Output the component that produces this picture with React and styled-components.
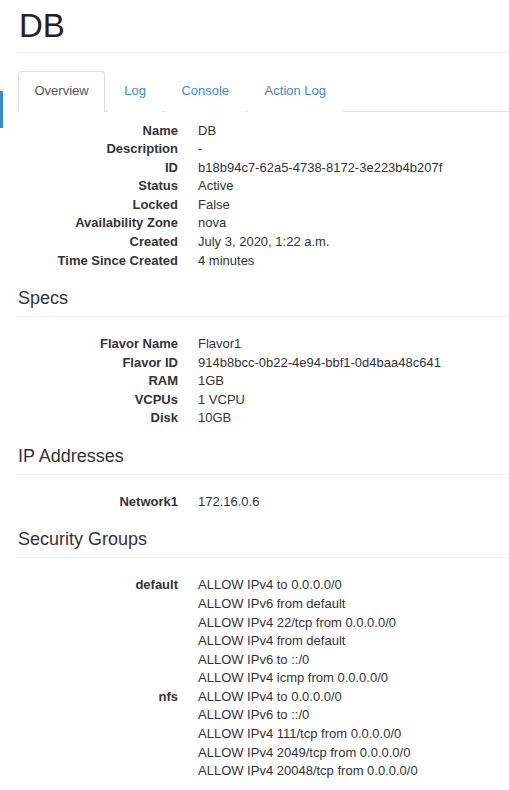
import React from "react";
import styled, { createGlobalStyle } from "styled-components";

const Global = createGlobalStyle`
  html, body { margin: 0; padding: 0; background: #fff; }
  body {
    font-family: "Liberation Sans", Arial, Helvetica, sans-serif;
    font-size: 13px;
    line-height: 1.42857;
    color: #333;
    overflow: hidden;
  }
  * { box-sizing: border-box; }
`;

const Page = styled.div`
  position: relative;
  padding-left: 18px;
  width: 509px;
`;

const SideMarker = styled.div`
  position: absolute;
  left: 0;
  top: 91px;
  width: 3px;
  height: 37px;
  background: #3a8ccd;
`;

const Title = styled.h1`
  margin: 0 0 18px;
  padding: 8px 0 8px 1px;
  font-size: 33px;
  line-height: 36px;
  font-weight: 400;
  color: #222;
  border-bottom: 1px solid #eee;
`;

const Tabs = styled.ul`
  display: flex;
  list-style: none;
  margin: 0;
  padding: 0;
  border-bottom: 1px solid #ddd;
`;

const TabItem = styled.li`
  margin: 0 2.5px -1px 0;
`;

const TabLink = styled.a`
  display: block;
  padding: 10px 15.5px;
  line-height: 18.57px;
  font-size: 13px;
  border: 1px solid ${(p) => (p.$active ? "#ddd" : "transparent")};
  border-bottom-color: transparent;
  border-radius: 4px 4px 0 0;
  background: #fff;
  color: ${(p) => (p.$active ? "#555" : "#428bca")};
  text-decoration: none;
  cursor: pointer;
`;

const Details = styled.dl`
  display: grid;
  grid-template-columns: 160px 1fr;
  column-gap: 20px;
  margin: ${(p) => (p.$first ? "10px" : "0")} 0 18px;
  line-height: 18.57px;
`;

const Term = styled.dt`
  font-weight: 700;
  text-align: right;
  white-space: nowrap;
`;

const Desc = styled.dd`
  margin: 0;
  white-space: nowrap;
`;

const SectionTitle = styled.h4`
  margin: 0;
  font-size: 18px;
  line-height: 20px;
  font-weight: 400;
  color: #333;
`;

const Rule = styled.hr`
  margin: 8px 0 18px;
  border: 0;
  border-top: 1px solid #eee;
  height: 0;
`;

const Rules = styled.div`
  display: flex;
  flex-direction: column;
`;

const overview = [
  ["Name", "DB"],
  ["Description", "-"],
  ["ID", "b18b94c7-62a5-4738-8172-3e223b4b207f"],
  ["Status", "Active"],
  ["Locked", "False"],
  ["Availability Zone", "nova"],
  ["Created", "July 3, 2020, 1:22 a.m."],
  ["Time Since Created", "4 minutes"],
];

const specs = [
  ["Flavor Name", "Flavor1"],
  ["Flavor ID", "914b8bcc-0b22-4e94-bbf1-0d4baa48c641"],
  ["RAM", "1GB"],
  ["VCPUs", "1 VCPU"],
  ["Disk", "10GB"],
];

const ips = [["Network1", "172.16.0.6"]];

const groups = [
  [
    "default",
    [
      "ALLOW IPv4 to 0.0.0.0/0",
      "ALLOW IPv6 from default",
      "ALLOW IPv4 22/tcp from 0.0.0.0/0",
      "ALLOW IPv4 from default",
      "ALLOW IPv6 to ::/0",
      "ALLOW IPv4 icmp from 0.0.0.0/0",
    ],
  ],
  [
    "nfs",
    [
      "ALLOW IPv4 to 0.0.0.0/0",
      "ALLOW IPv6 to ::/0",
      "ALLOW IPv4 111/tcp from 0.0.0.0/0",
      "ALLOW IPv4 2049/tcp from 0.0.0.0/0",
      "ALLOW IPv4 20048/tcp from 0.0.0.0/0",
    ],
  ],
];

function Pairs({ rows, first }) {
  return (
    <Details $first={first}>
      {rows.map(([k, v]) => (
        <React.Fragment key={k}>
          <Term>{k}</Term>
          <Desc>{v}</Desc>
        </React.Fragment>
      ))}
    </Details>
  );
}

function Section({ title, children }) {
  return (
    <>
      <SectionTitle>{title}</SectionTitle>
      <Rule />
      {children}
    </>
  );
}

export default function App() {
  const tabs = ["Overview", "Log", "Console", "Action Log"];
  return (
    <>
      <Global />
      <SideMarker />
      <Page>
        <Title>DB</Title>
        <Tabs>
          {tabs.map((t, i) => (
            <TabItem key={t}>
              <TabLink $active={i === 0}>{t}</TabLink>
            </TabItem>
          ))}
        </Tabs>
        <Pairs rows={overview} first />
        <Section title="Specs">
          <Pairs rows={specs} />
        </Section>
        <Section title="IP Addresses">
          <Pairs rows={ips} />
        </Section>
        <Section title="Security Groups">
          <Details>
            {groups.map(([name, rules]) => (
              <React.Fragment key={name}>
                <Term>{name}</Term>
                <Desc>
                  <Rules>
                    {rules.map((r, i) => (
                      <span key={i}>{r}</span>
                    ))}
                  </Rules>
                </Desc>
              </React.Fragment>
            ))}
          </Details>
        </Section>
      </Page>
    </>
  );
}
